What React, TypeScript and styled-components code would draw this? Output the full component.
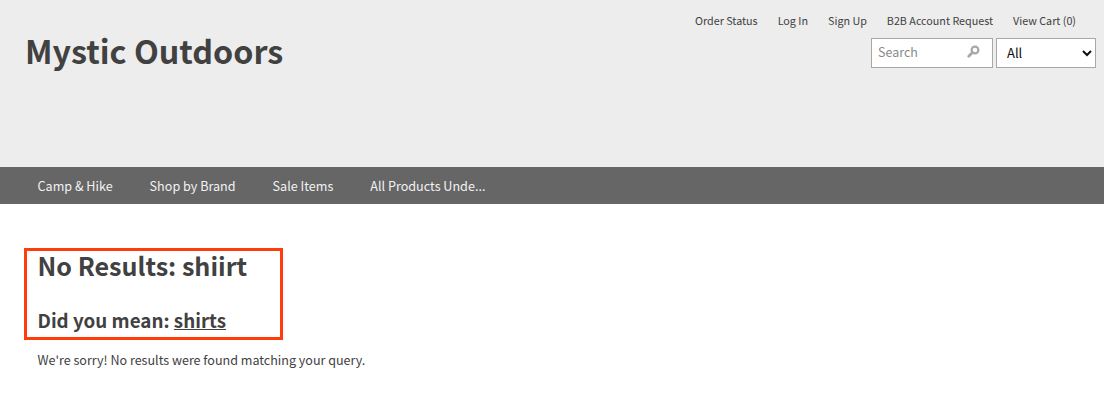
import { FC } from 'react';
import styled, { createGlobalStyle } from 'styled-components';

const FONT = `"Noto Sans CJK SC", "Open Sans", sans-serif`;

const GlobalStyle = createGlobalStyle`
  html, body {
    margin: 0;
    padding: 0;
    background: #fff;
    font-family: ${FONT};
  }
`;

const topLinks = ['Order Status', 'Log In', 'Sign Up', 'B2B Account Request', 'View Cart (0)'];
const navItems = ['Camp & Hike', 'Shop by Brand', 'Sale Items', 'All Products Unde...'];

const SearchIcon = () => (
  <svg width="13" height="13" viewBox="0 0 13 13" aria-hidden="true">
    <circle cx="8" cy="5" r="3.4" fill="none" stroke="#a8a8a8" strokeWidth="2.2" />
    <path d="M5.4 7.6 1.8 11.2" stroke="#a8a8a8" strokeWidth="2.8" strokeLinecap="round" />
  </svg>
);

const App: FC = () => {
  return (
    <Page>
      <GlobalStyle />
      <Header>
        <Logo>Mystic Outdoors</Logo>
        <HeaderRight>
          <TopLinks>
            {topLinks.map((label) => (
              <TopLink key={label} href="#">{label}</TopLink>
            ))}
          </TopLinks>
          <SearchRow>
            <SearchBox>
              <SearchInput placeholder="Search" />
              <SearchIcon />
            </SearchBox>
            <ScopeSelect defaultValue="All">
              <option>All</option>
            </ScopeSelect>
          </SearchRow>
        </HeaderRight>
      </Header>
      <Nav>
        {navItems.map((label) => (
          <NavLink key={label} href="#">{label}</NavLink>
        ))}
      </Nav>
      <Main>
        <Highlight>
          <Title>No Results: shiirt</Title>
          <Subtitle>
            Did you mean: <SuggestLink href="#">shirts</SuggestLink>
          </Subtitle>
        </Highlight>
        <Message>We're sorry! No results were found matching your query.</Message>
      </Main>
    </Page>
  );
};

const Page = styled.div`
  width: 1104px;
  height: 420px;
  overflow: hidden;
  color: #414141;
`;
const Header = styled.header`
  display: flex;
  justify-content: space-between;
  align-items: flex-start;
  height: 167px;
  padding: 0 8px 0 25px;
  box-sizing: border-box;
  background: #ededed;
`;
const Logo = styled.h1`
  margin: 28px 0 0;
  font-size: 32.25px;
  line-height: 44px;
  font-weight: 700;
  color: #414141;
`;
const HeaderRight = styled.div`
  display: flex;
  flex-direction: column;
  align-items: flex-end;
`;
const TopLinks = styled.nav`
  display: flex;
  gap: 20px;
  margin: 12px 20px 0 0;
`;
const TopLink = styled.a`
  font-size: 10.75px;
  line-height: 18px;
  color: #414141;
  text-decoration: none;
`;
const SearchRow = styled.div`
  display: flex;
  gap: 3px;
  margin-top: 8px;
`;
const SearchBox = styled.div`
  display: flex;
  align-items: center;
  width: 122px;
  height: 30px;
  padding: 0 12px 3px 6px;
  box-sizing: border-box;
  background: #fff;
  border: 1px solid #a8a8a8;
`;
const SearchInput = styled.input`
  flex: 1;
  min-width: 0;
  padding: 0;
  border: 0;
  outline: 0;
  font-family: ${FONT};
  font-size: 12.5px;
  color: #414141;
  &::placeholder {
    color: #8a8a8a;
    opacity: 1;
  }
`;
const ScopeSelect = styled.select`
  width: 100px;
  height: 30px;
  padding: 0 0 2px 6px;
  box-sizing: border-box;
  background: #fff;
  border: 1px solid #a8a8a8;
  border-radius: 0;
  font-family: ${FONT};
  font-size: 13px;
  color: #0f0f0f;
`;
const Nav = styled.nav`
  display: flex;
  align-items: center;
  gap: 37px;
  height: 37px;
  padding-left: 37.5px;
  background: #666;
`;
const NavLink = styled.a`
  font-size: 12.6px;
  line-height: 20px;
  color: #f2f2f2;
  text-decoration: none;
`;
const Main = styled.main`
  padding: 44px 0 0 24px;
`;
const Highlight = styled.div`
  width: 259px;
  height: 92px;
  padding: 0 0 0 10.5px;
  box-sizing: border-box;
  border: 3px solid #ff3d0a;
`;
const Title = styled.h2`
  margin: -1px 0 0;
  font-size: 25.1px;
  line-height: 31px;
  font-weight: 700;
  color: #414141;
`;
const Subtitle = styled.h3`
  margin: 25px 0 0;
  font-size: 18.8px;
  line-height: 28px;
  font-weight: 700;
  color: #414141;
`;
const SuggestLink = styled.a`
  color: #414141;
  text-decoration: underline;
`;
const Message = styled.p`
  margin: 10px 0 0 13.5px;
  font-size: 12.55px;
  line-height: 20px;
  color: #414141;
`;

export default App;
